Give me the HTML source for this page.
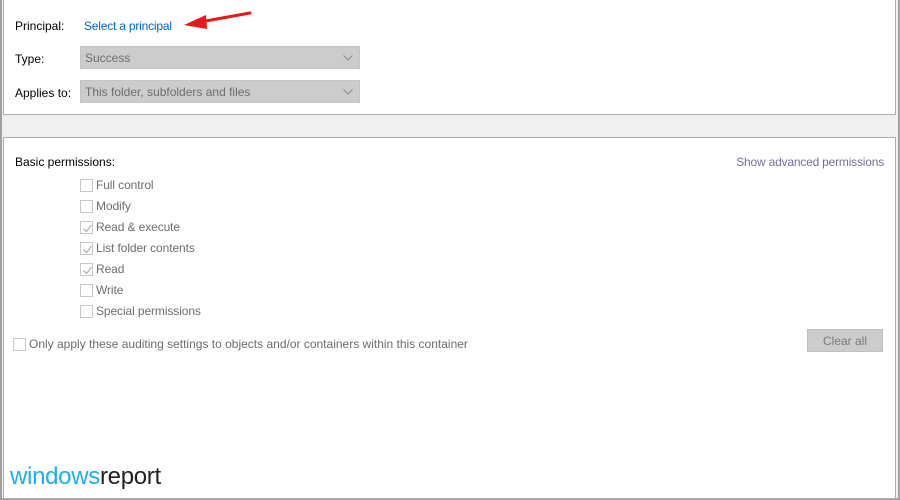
<!DOCTYPE html>
<html><head><style>
*{margin:0;padding:0;box-sizing:border-box}
body{width:900px;height:500px;background:#f0f0f0;position:relative;overflow:hidden;font-family:"Liberation Sans",sans-serif;font-size:12px;color:#000}
.edgeL{position:absolute;left:0;top:0;width:2px;height:500px;background:#a0a0a0}
.edgeR{position:absolute;right:0;top:0;width:2px;height:500px;background:#a0a0a0}
.edgeB{position:absolute;left:0;bottom:0;width:900px;height:2px;background:#a0a0a0}
.panel{position:absolute;background:#fff;border:1px solid #adadad}
.t{position:absolute;white-space:nowrap}
.combo{position:absolute;left:80px;width:280px;height:23px;background:#cccccc;border:1px solid #c4c4c4;color:#6d6d6d;padding:4px 0 0 4px}
.combo svg{position:absolute;right:6px;top:8px}
.cb{position:absolute;width:13px;height:13px;border:1px solid #c8c8c8;background:#fff}
.cb svg{position:absolute;left:1px;top:1px}
.perm{position:absolute;left:96px;color:#6d6d6d;letter-spacing:-0.1px}
</style></head><body>
<div class="edgeL"></div><div class="edgeR"></div><div class="edgeB"></div>
<div class="panel" style="left:3px;top:-1px;width:893px;height:116px"></div>
<div class="panel" style="left:3px;top:137px;width:893px;height:362px"></div>

<div class="t" style="left:15px;top:19px">Principal:</div>
<div class="t" style="left:84px;top:19px;color:#0066cc;letter-spacing:-0.2px">Select a principal</div>
<svg style="position:absolute;left:176px;top:10px" width="78" height="22"><path d="M74 3 L24 12" stroke="#e81818" stroke-width="3" stroke-linecap="round"/><path d="M8 15 L30 5 L31 19 Z" fill="#e81818"/></svg>

<div class="t" style="left:15px;top:52px">Type:</div>
<div class="combo" style="top:46px">Success<svg width="10" height="6"><path d="M0.5 0.5 L5 5 L9.5 0.5" stroke="#8c8c8c" fill="none"/></svg></div>
<div class="t" style="left:15px;top:86px">Applies to:</div>
<div class="combo" style="top:80px">This folder, subfolders and files<svg width="10" height="6"><path d="M0.5 0.5 L5 5 L9.5 0.5" stroke="#8c8c8c" fill="none"/></svg></div>

<div class="t" style="left:15px;top:155px">Basic permissions:</div>
<div class="t" style="right:16px;top:155px;color:#7a6f96;letter-spacing:-0.2px">Show advanced permissions</div>

<div class="cb" style="left:80px;top:179px"></div><div class="perm" style="top:178px">Full control</div>
<div class="cb" style="left:80px;top:200px"></div><div class="perm" style="top:199px">Modify</div>
<div class="cb" style="left:80px;top:221px"><svg width="11" height="11"><path d="M1.5 5.5 L4.5 8.5 L9.5 2" stroke="#a0a0a0" fill="none"/></svg></div><div class="perm" style="top:220px">Read &amp; execute</div>
<div class="cb" style="left:80px;top:242px"><svg width="11" height="11"><path d="M1.5 5.5 L4.5 8.5 L9.5 2" stroke="#a0a0a0" fill="none"/></svg></div><div class="perm" style="top:241px">List folder contents</div>
<div class="cb" style="left:80px;top:263px"><svg width="11" height="11"><path d="M1.5 5.5 L4.5 8.5 L9.5 2" stroke="#a0a0a0" fill="none"/></svg></div><div class="perm" style="top:262px">Read</div>
<div class="cb" style="left:80px;top:284px"></div><div class="perm" style="top:283px">Write</div>
<div class="cb" style="left:80px;top:305px"></div><div class="perm" style="top:304px">Special permissions</div>

<div class="cb" style="left:13px;top:338px"></div>
<div class="t" style="left:29px;top:337px;color:#6d6d6d">Only apply these auditing settings to objects and/or containers within this container</div>

<div style="position:absolute;left:807px;top:329px;width:76px;height:23px;background:#cccccc;border:1px solid #bfbfbf;color:#7a7a7a;text-align:center;padding-top:4px">Clear all</div>

<div class="t" style="left:10px;top:463px;font-size:24px;letter-spacing:-0.3px"><span style="color:#1ab0ec">windows</span><span style="color:#222">report</span></div>
</body></html>
